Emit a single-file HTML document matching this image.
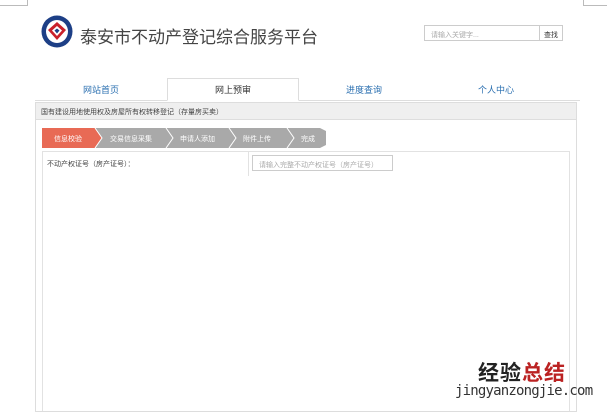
<!DOCTYPE html>
<html><head><meta charset="utf-8"><style>
*{margin:0;padding:0;box-sizing:border-box}
body{width:607px;height:407px;background:#fff;position:relative;overflow:hidden;font-family:"Liberation Sans","Noto Sans CJK SC",sans-serif;color:#333}
.a{position:absolute}
</style></head><body>
<div class="a" style="left:0;top:0;width:28px;height:6px;border-right:1px solid #bbb;border-bottom:1px solid #bbb"></div>
<div class="a" style="left:583px;top:0;width:24px;height:6px;border-left:1px solid #bbb;border-bottom:1px solid #bbb"></div>
<svg class="a" style="left:41px;top:15px" width="32" height="33" viewBox="0 0 32 33">
<ellipse cx="16" cy="16.5" rx="15.5" ry="16" fill="#1d3f86"/>
<ellipse cx="16" cy="16.5" rx="11" ry="11.5" fill="#fff"/>
<path d="M16 7 L25 15 L16 25 L7 15Z" fill="#c8202a"/>
<path d="M16 11 L21 15.5 L16 21 L11 15.5Z" fill="#fff"/>
<path d="M16 13.5 L18.5 15.5 L16 18.5 L13.5 15.5Z" fill="#1d3f86"/>
</svg>
<div class="a" style="left:80px;top:23px;font-size:17px;color:#444">泰安市不动产登记综合服务平台</div>
<div class="a" style="left:424px;top:25px;width:116px;height:16px;border:1px solid #ccc;font-size:7px;color:#aaa;padding:4px 0 0 6px">请输入关键字...</div>
<div class="a" style="left:539px;top:25px;width:24px;height:16px;border:1px solid #ccc;font-size:7px;color:#333;text-align:center;padding-top:4px">查找</div>
<div class="a" style="left:35px;top:100px;width:545px;height:1px;background:#ddd"></div>
<div class="a" style="left:167px;top:78px;width:132px;height:23px;border:1px solid #ddd;border-bottom:1px solid #fff;background:#fff"></div>
<div class="a" style="left:70px;top:83px;width:62px;text-align:center;font-size:9px;color:#2a6fb0">网站首页</div>
<div class="a" style="left:202px;top:83px;width:62px;text-align:center;font-size:9px;color:#333">网上预审</div>
<div class="a" style="left:333px;top:83px;width:62px;text-align:center;font-size:9px;color:#2a6fb0">进度查询</div>
<div class="a" style="left:465px;top:83px;width:62px;text-align:center;font-size:9px;color:#2a6fb0">个人中心</div>
<div class="a" style="left:35px;top:102px;width:542px;height:310px;border:1px solid #ddd"></div>
<div class="a" style="left:36px;top:103px;width:540px;height:17px;background:#efefef;border-bottom:1px solid #ddd;font-size:7px;color:#444;padding:4px 0 0 5px">国有建设用地使用权及房屋所有权转移登记（存量房买卖）</div>
<svg class="a" style="left:42px;top:128px" width="290" height="20" viewBox="0 0 290 20">
<path d="M0 0H278L284 3V17L278 20H0Z" fill="#a9a9a9"/>
<path d="M0 0H53L60 10L53 20H0Z" fill="#e86a55"/>
<g fill="none" stroke="#fff" stroke-width="1"><path d="M53 0L60 10L53 20"/><path d="M124 0L131 10L124 20"/><path d="M187 0L194 10L187 20"/><path d="M245 0L252 10L245 20"/></g>
<g font-size="7" fill="#fff" font-family="Liberation Sans,Noto Sans CJK SC,sans-serif"><text x="12" y="13">信息校验</text><text x="68" y="13">交易信息采集</text><text x="138" y="13">申请人添加</text><text x="201" y="13">附件上传</text><text x="259" y="13">完成</text></g>
</svg>
<div class="a" style="left:42px;top:151px;width:528px;height:260px;border-left:1px solid #e2e2e2;border-right:1px solid #e2e2e2;border-top:1px solid #e2e2e2"></div>
<div class="a" style="left:248px;top:151px;width:1px;height:25px;background:#e2e2e2"></div>
<div class="a" style="left:47px;top:159px;font-size:7px;color:#444">不动产权证号（房产证号）：</div>
<div class="a" style="left:252px;top:155px;width:141px;height:16px;border:1px solid #ccc;font-size:7px;color:#aaa;padding:4px 0 0 6px">请输入完整不动产权证号（房产证号）</div>
<div class="a" style="left:478px;top:357px;font-size:21px;font-weight:bold;color:#222;letter-spacing:1px">经验<span style="color:#b22">总结</span></div>
<div class="a" style="left:455px;top:383px;font-size:14px;font-family:'DejaVu Sans Mono',monospace;color:#333;letter-spacing:-0.8px">jingyanzongjie.com</div>
</body></html>
